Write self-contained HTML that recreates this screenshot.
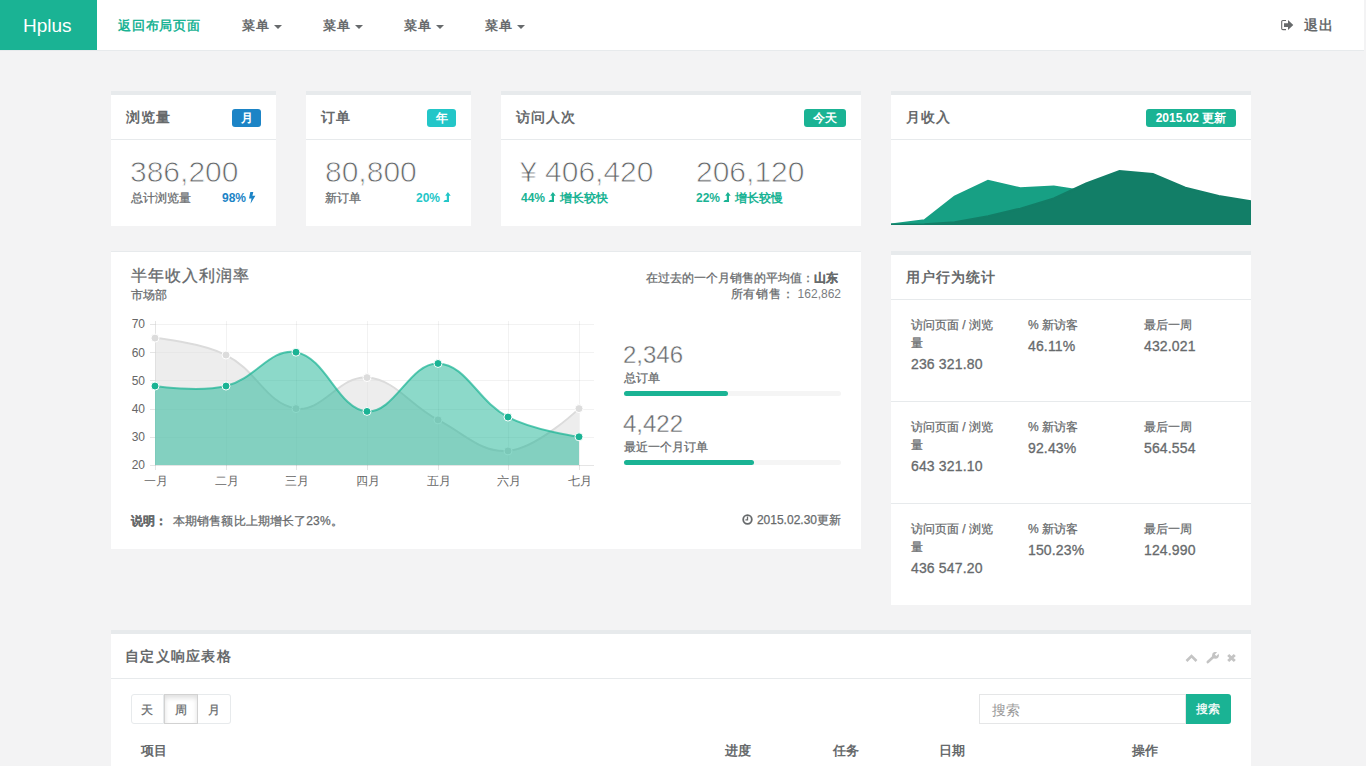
<!DOCTYPE html>
<html><head><meta charset="utf-8">
<style>
html,body{margin:0;padding:0}
body{width:1366px;height:766px;overflow:hidden;position:relative;background:#f3f3f4;font-family:"Liberation Sans",sans-serif;color:#676a6c;font-size:12px}
.a{position:absolute;white-space:nowrap}
.box{position:absolute;background:#fff}
.bt{border-top:4px solid #e7eaec}
.hl{position:absolute;left:0;right:0;height:1px;background:#e7eaec}
.c12{font-size:12px;line-height:20px;-webkit-text-stroke:.25px currentColor}
.ttl{font-size:14px;line-height:20px;font-weight:bold;color:#676a6c;letter-spacing:1px}
.lbl{position:absolute;height:18px;line-height:18px;border-radius:3px;color:#fff;font-weight:bold;font-size:12px;text-align:center}
.big{font-size:30px;line-height:34px;color:#676a6c;-webkit-text-stroke:.8px #fff}
.mid{font-size:24px;line-height:28px;color:#676a6c;-webkit-text-stroke:.4px #fff}
.nav{font-size:12.5px;line-height:20px;font-weight:bold;color:#676a6c;letter-spacing:.8px}
.caret{position:absolute;width:0;height:0;border-left:4px solid transparent;border-right:4px solid transparent;border-top:4px solid #676a6c}
.num{font-size:14px;line-height:20px;color:#676a6c;letter-spacing:.15px;-webkit-text-stroke:.3px #676a6c}
</style></head><body>

<!-- NAVBAR -->
<div class="box" style="left:0;top:0;width:1364px;height:50px;border-bottom:1px solid #e7eaec"></div>
<div class="box" style="left:0;top:0;width:97px;height:50px;background:#1ab394"></div>
<div class="a" style="left:23px;top:14px;font-size:19px;line-height:24px;color:#fff">Hplus</div>
<div class="a nav" style="left:118px;top:15.5px;color:#1ab394">返回布局页面</div>
<div class="a nav" style="left:242px;top:15.5px">菜单</div><div class="caret" style="left:274px;top:25px"></div>
<div class="a nav" style="left:323px;top:15.5px">菜单</div><div class="caret" style="left:355px;top:25px"></div>
<div class="a nav" style="left:404px;top:15.5px">菜单</div><div class="caret" style="left:436px;top:25px"></div>
<div class="a nav" style="left:485px;top:15.5px">菜单</div><div class="caret" style="left:517px;top:25px"></div>
<svg class="a" style="left:1280px;top:19px" width="15" height="13" viewBox="0 0 15 13"><path d="M6 1.5H2.9Q1.7 1.5 1.7 2.7V9.4Q1.7 10.6 2.9 10.6H6" fill="none" stroke="#676a6c" stroke-width="1.1"/><path d="M4 4.2H8V1L13.3 6.1L8 11.1V8H4Z" fill="#676a6c"/></svg>
<div class="a" style="left:1304px;top:15px;font-size:14px;line-height:20px;letter-spacing:1px;font-weight:bold;color:#676a6c">退出</div>

<!-- BOX 1 -->
<div class="box bt" style="left:111px;top:91px;width:165px;height:131px">
  <div class="hl" style="top:44px"></div>
</div>
<div class="a ttl" style="left:126px;top:107px">浏览量</div>
<div class="lbl" style="left:232px;top:109px;width:29px;background:#1c84c6">月</div>
<div class="a big" style="left:130px;top:155px">386,200</div>
<div class="a c12" style="left:131px;top:188px">总计浏览量</div>
<div class="a" style="left:222px;top:188px;font-size:12px;line-height:20px;font-weight:bold;color:#1c84c6">98% <svg width="7" height="12" viewBox="0 0 7 12" style="vertical-align:-2px"><path d="M1.3 0H4.3L3.4 3.8H6.4L1.5 11.8L2.5 6.4H0Z" fill="#1c84c6"/></svg></div>

<!-- BOX 2 -->
<div class="box bt" style="left:306px;top:91px;width:165px;height:131px">
  <div class="hl" style="top:44px"></div>
</div>
<div class="a ttl" style="left:321px;top:107px">订单</div>
<div class="lbl" style="left:427px;top:109px;width:29px;background:#23c6c8">年</div>
<div class="a big" style="left:325px;top:155px">80,800</div>
<div class="a c12" style="left:325px;top:188px">新订单</div>
<div class="a" style="left:416px;top:188px;font-size:12px;line-height:20px;font-weight:bold;color:#23c6c8">20% <svg width="8" height="10" viewBox="0 0 8 10" style="vertical-align:0px"><path d="M0.3 9.9L1.8 7.9H3.8V3.8H2.2L4.9 0L7.7 3.8H6V9.9Z" fill="#23c6c8"/></svg></div>

<!-- BOX 3 -->
<div class="box bt" style="left:501px;top:91px;width:360px;height:131px">
  <div class="hl" style="top:44px"></div>
</div>
<div class="a ttl" style="left:516px;top:107px">访问人次</div>
<div class="lbl" style="left:804px;top:109px;width:42px;background:#1ab394">今天</div>
<div class="a big" style="left:520px;top:155px">¥ 406,420</div>
<div class="a big" style="left:696px;top:155px">206,120</div>
<div class="a" style="left:521px;top:188px;font-size:12px;line-height:20px;font-weight:bold;color:#1ab394">44% <svg width="8" height="10" viewBox="0 0 8 10" style="vertical-align:0px"><path d="M0.3 9.9L1.8 7.9H3.8V3.8H2.2L4.9 0L7.7 3.8H6V9.9Z" fill="#1ab394"/></svg> 增长较快</div>
<div class="a" style="left:696px;top:188px;font-size:12px;line-height:20px;font-weight:bold;color:#1ab394">22% <svg width="8" height="10" viewBox="0 0 8 10" style="vertical-align:0px"><path d="M0.3 9.9L1.8 7.9H3.8V3.8H2.2L4.9 0L7.7 3.8H6V9.9Z" fill="#1ab394"/></svg> 增长较慢</div>

<!-- BOX 4 -->
<div class="box bt" style="left:891px;top:91px;width:360px;height:130px">
  <div class="hl" style="top:44px"></div>
</div>
<div class="a ttl" style="left:906px;top:107px">月收入</div>
<div class="lbl" style="left:1146px;top:109px;width:90px;background:#1ab394">2015.02 更新</div>
<svg class="a" style="left:0;top:0" width="1366" height="766"><defs><clipPath id="fc"><rect x="891" y="140" width="360" height="85"/></clipPath></defs><g clip-path="url(#fc)">
  <path d="M891.0 224.5 L924.4 220.3 L954.6 196.7 L988.0 180.9 L1020.3 188.3 L1053.8 186.6 L1086.1 191.4 L1119.5 191.5 L1152.9 195.9 L1185.3 208.0 L1218.7 210.1 L1251.0 210.5 L1251.0 224.5 Z" fill="#17a084" stroke="#17a084" stroke-width="2"/>
  <path d="M891.0 224.5 L924.4 224.2 L954.6 222.3 L988.0 216.2 L1020.3 208.6 L1053.8 198.5 L1086.1 183.5 L1119.5 171.1 L1152.9 174.1 L1185.3 187.7 L1218.7 195.9 L1251.0 201.3 L1251.0 224.5 Z" fill="#127e67" stroke="#127e67" stroke-width="2"/>
</g></svg>

<!-- BOX 5 -->
<div class="box" style="left:111px;top:251px;width:750px;height:298px;border-top:1px solid #e7eaec;box-sizing:border-box"></div>
<div class="a" style="left:131px;top:266px;font-size:16px;line-height:20px;letter-spacing:1px;-webkit-text-stroke:.3px #676a6c">半年收入利润率</div>
<div class="a c12" style="left:131px;top:285px">市场部</div>
<div class="a c12" style="right:528px;top:268px">在过去的一个月销售的平均值：<b>山东</b></div>
<div class="a c12" style="right:525px;top:284px"><span style="letter-spacing:.7px">所有销售：</span> <span style="-webkit-text-stroke:0;color:#7a7d7f">162,862</span></div>

<!--CHART--><svg class="a" style="left:0;top:0" width="1366" height="766">
<path d="M155 465.5H594" stroke="rgba(0,0,0,.1)" stroke-width="1"/>
<path d="M150 465.5H155" stroke="rgba(0,0,0,.1)" stroke-width="1"/>
<text x="145" y="469.3" text-anchor="end" font-size="12" fill="#666">20</text>
<path d="M155 437.5H594" stroke="rgba(0,0,0,.05)" stroke-width="1"/>
<path d="M150 437.5H155" stroke="rgba(0,0,0,.1)" stroke-width="1"/>
<text x="145" y="441.1" text-anchor="end" font-size="12" fill="#666">30</text>
<path d="M155 409.5H594" stroke="rgba(0,0,0,.05)" stroke-width="1"/>
<path d="M150 409.5H155" stroke="rgba(0,0,0,.1)" stroke-width="1"/>
<text x="145" y="412.9" text-anchor="end" font-size="12" fill="#666">40</text>
<path d="M155 380.5H594" stroke="rgba(0,0,0,.05)" stroke-width="1"/>
<path d="M150 380.5H155" stroke="rgba(0,0,0,.1)" stroke-width="1"/>
<text x="145" y="384.7" text-anchor="end" font-size="12" fill="#666">50</text>
<path d="M155 352.5H594" stroke="rgba(0,0,0,.05)" stroke-width="1"/>
<path d="M150 352.5H155" stroke="rgba(0,0,0,.1)" stroke-width="1"/>
<text x="145" y="356.5" text-anchor="end" font-size="12" fill="#666">60</text>
<path d="M155 324.5H594" stroke="rgba(0,0,0,.05)" stroke-width="1"/>
<path d="M150 324.5H155" stroke="rgba(0,0,0,.1)" stroke-width="1"/>
<text x="145" y="328.3" text-anchor="end" font-size="12" fill="#666">70</text>
<path d="M155.5 465.0V321.0" stroke="rgba(0,0,0,.1)" stroke-width="1"/>
<path d="M155.5 465.0V470.0" stroke="rgba(0,0,0,.1)" stroke-width="1"/>
<text x="155.5" y="484.5" text-anchor="middle" font-size="12" fill="#666">一月</text>
<path d="M226.5 465.0V321.0" stroke="rgba(0,0,0,.05)" stroke-width="1"/>
<path d="M226.5 465.0V470.0" stroke="rgba(0,0,0,.1)" stroke-width="1"/>
<text x="226.5" y="484.5" text-anchor="middle" font-size="12" fill="#666">二月</text>
<path d="M296.5 465.0V321.0" stroke="rgba(0,0,0,.05)" stroke-width="1"/>
<path d="M296.5 465.0V470.0" stroke="rgba(0,0,0,.1)" stroke-width="1"/>
<text x="296.5" y="484.5" text-anchor="middle" font-size="12" fill="#666">三月</text>
<path d="M367.5 465.0V321.0" stroke="rgba(0,0,0,.05)" stroke-width="1"/>
<path d="M367.5 465.0V470.0" stroke="rgba(0,0,0,.1)" stroke-width="1"/>
<text x="367.5" y="484.5" text-anchor="middle" font-size="12" fill="#666">四月</text>
<path d="M438.5 465.0V321.0" stroke="rgba(0,0,0,.05)" stroke-width="1"/>
<path d="M438.5 465.0V470.0" stroke="rgba(0,0,0,.1)" stroke-width="1"/>
<text x="438.5" y="484.5" text-anchor="middle" font-size="12" fill="#666">五月</text>
<path d="M508.5 465.0V321.0" stroke="rgba(0,0,0,.05)" stroke-width="1"/>
<path d="M508.5 465.0V470.0" stroke="rgba(0,0,0,.1)" stroke-width="1"/>
<text x="508.5" y="484.5" text-anchor="middle" font-size="12" fill="#666">六月</text>
<path d="M579.5 465.0V321.0" stroke="rgba(0,0,0,.05)" stroke-width="1"/>
<path d="M579.5 465.0V470.0" stroke="rgba(0,0,0,.1)" stroke-width="1"/>
<text x="579.5" y="484.5" text-anchor="middle" font-size="12" fill="#666">七月</text>
<path d="M155.00 338.10 C155.00 338.10 200.45 342.25 226.00 355.02 C256.85 370.45 265.98 403.80 296.00 408.60 C322.38 412.82 339.52 375.40 367.00 377.58 C396.32 379.91 408.72 404.66 438.00 419.88 C465.12 433.98 480.88 453.07 508.00 450.90 C537.28 448.56 579.00 408.60 579.00 408.60" fill="none" stroke="rgba(220,220,220,1)" stroke-width="2"/>
<path d="M155.00 338.10 C155.00 338.10 200.45 342.25 226.00 355.02 C256.85 370.45 265.98 403.80 296.00 408.60 C322.38 412.82 339.52 375.40 367.00 377.58 C396.32 379.91 408.72 404.66 438.00 419.88 C465.12 433.98 480.88 453.07 508.00 450.90 C537.28 448.56 579.00 408.60 579.00 408.60 L579 465.0 L155 465.0Z" fill="rgba(220,220,220,0.5)"/>
<circle cx="155" cy="338.10" r="4" fill="rgba(220,220,220,1)" stroke="#fff" stroke-width="1"/>
<circle cx="226" cy="355.02" r="4" fill="rgba(220,220,220,1)" stroke="#fff" stroke-width="1"/>
<circle cx="296" cy="408.60" r="4" fill="rgba(220,220,220,1)" stroke="#fff" stroke-width="1"/>
<circle cx="367" cy="377.58" r="4" fill="rgba(220,220,220,1)" stroke="#fff" stroke-width="1"/>
<circle cx="438" cy="419.88" r="4" fill="rgba(220,220,220,1)" stroke="#fff" stroke-width="1"/>
<circle cx="508" cy="450.90" r="4" fill="rgba(220,220,220,1)" stroke="#fff" stroke-width="1"/>
<circle cx="579" cy="408.60" r="4" fill="rgba(220,220,220,1)" stroke="#fff" stroke-width="1"/>
<path d="M155.00 386.04 C155.00 386.04 199.08 392.50 226.00 386.04 C255.48 378.96 270.24 347.56 296.00 352.20 C326.64 357.71 337.52 409.08 367.00 411.42 C394.32 413.59 410.20 362.37 438.00 363.48 C466.60 364.62 477.28 401.09 508.00 417.06 C533.68 430.41 579.00 436.80 579.00 436.80" fill="none" stroke="rgba(26,179,148,0.7)" stroke-width="2"/>
<path d="M155.00 386.04 C155.00 386.04 199.08 392.50 226.00 386.04 C255.48 378.96 270.24 347.56 296.00 352.20 C326.64 357.71 337.52 409.08 367.00 411.42 C394.32 413.59 410.20 362.37 438.00 363.48 C466.60 364.62 477.28 401.09 508.00 417.06 C533.68 430.41 579.00 436.80 579.00 436.80 L579 465.0 L155 465.0Z" fill="rgba(26,179,148,0.5)"/>
<circle cx="155" cy="386.04" r="4" fill="rgba(26,179,148,1)" stroke="#fff" stroke-width="1"/>
<circle cx="226" cy="386.04" r="4" fill="rgba(26,179,148,1)" stroke="#fff" stroke-width="1"/>
<circle cx="296" cy="352.20" r="4" fill="rgba(26,179,148,1)" stroke="#fff" stroke-width="1"/>
<circle cx="367" cy="411.42" r="4" fill="rgba(26,179,148,1)" stroke="#fff" stroke-width="1"/>
<circle cx="438" cy="363.48" r="4" fill="rgba(26,179,148,1)" stroke="#fff" stroke-width="1"/>
<circle cx="508" cy="417.06" r="4" fill="rgba(26,179,148,1)" stroke="#fff" stroke-width="1"/>
<circle cx="579" cy="436.80" r="4" fill="rgba(26,179,148,1)" stroke="#fff" stroke-width="1"/>
</svg><!--/CHART-->

<div class="a mid" style="left:623px;top:341px">2,346</div>
<div class="a c12" style="left:624px;top:368px">总订单</div>
<div class="box" style="left:624px;top:391px;width:217px;height:5px;background:#f5f5f5;border-radius:3px"><div style="width:104px;height:5px;background:#1ab394;border-radius:3px"></div></div>
<div class="a mid" style="left:623px;top:410px">4,422</div>
<div class="a c12" style="left:624px;top:437px">最近一个月订单</div>
<div class="box" style="left:624px;top:460px;width:217px;height:5px;background:#f5f5f5;border-radius:3px"><div style="width:130px;height:5px;background:#1ab394;border-radius:3px"></div></div>

<div class="a c12" style="left:131px;top:511px"><b>说明：</b></div><div class="a c12" style="left:173px;top:511px;letter-spacing:.12px">本期销售额比上期增长了23%。</div>
<div class="a c12" style="right:525px;top:510px"><svg style="margin-right:1px;vertical-align:-1px" width="11" height="11" viewBox="0 0 11 11" style="vertical-align:-1px"><circle cx="5.5" cy="5.5" r="4.3" fill="none" stroke="#676a6c" stroke-width="1.8"/><path d="M5.5 2.6V5.8H3.4" fill="none" stroke="#676a6c" stroke-width="1.3"/></svg> 2015.02.30更新</div>

<!-- BOX 6 -->
<div class="box bt" style="left:891px;top:251px;width:360px;height:350px">
  <div class="hl" style="top:44px"></div>
  <div class="hl" style="top:146px"></div>
  <div class="hl" style="top:248px"></div>
</div>
<div class="a ttl" style="left:906px;top:267px">用户行为统计</div>
<div class="a c12" style="left:911px;top:316px;line-height:18px">访问页面 / 浏览<br>量</div>
<div class="a num" style="left:911px;top:354px">236 321.80</div>
<div class="a c12" style="left:1028px;top:316px;line-height:18px">% 新访客</div>
<div class="a num" style="left:1028px;top:336px">46.11%</div>
<div class="a c12" style="left:1144px;top:316px;line-height:18px">最后一周</div>
<div class="a num" style="left:1144px;top:336px">432.021</div>
<div class="a c12" style="left:911px;top:418px;line-height:18px">访问页面 / 浏览<br>量</div>
<div class="a num" style="left:911px;top:456px">643 321.10</div>
<div class="a c12" style="left:1028px;top:418px;line-height:18px">% 新访客</div>
<div class="a num" style="left:1028px;top:438px">92.43%</div>
<div class="a c12" style="left:1144px;top:418px;line-height:18px">最后一周</div>
<div class="a num" style="left:1144px;top:438px">564.554</div>
<div class="a c12" style="left:911px;top:520px;line-height:18px">访问页面 / 浏览<br>量</div>
<div class="a num" style="left:911px;top:558px">436 547.20</div>
<div class="a c12" style="left:1028px;top:520px;line-height:18px">% 新访客</div>
<div class="a num" style="left:1028px;top:540px">150.23%</div>
<div class="a c12" style="left:1144px;top:520px;line-height:18px">最后一周</div>
<div class="a num" style="left:1144px;top:540px">124.990</div>

<!-- BOX 7 -->
<div class="box bt" style="left:111px;top:630px;width:1140px;height:140px">
  <div class="hl" style="top:44px"></div>
</div>
<div class="a ttl" style="left:125px;top:646px;letter-spacing:1.3px">自定义响应表格</div>

<div class="box" style="left:131px;top:694px;width:33px;height:30px;border:1px solid #e7eaec;box-sizing:border-box;border-radius:3px 0 0 3px"></div>
<div class="box" style="left:164px;top:694px;width:34px;height:30px;border:1px solid #d2d2d2;box-sizing:border-box;box-shadow:inset 0 3px 5px rgba(0,0,0,.125)"></div>
<div class="box" style="left:198px;top:694px;width:33px;height:30px;border:1px solid #e7eaec;border-left:0;box-sizing:border-box;border-radius:0 3px 3px 0"></div>
<div class="a c12" style="left:141px;top:700px">天</div>
<div class="a c12" style="left:175px;top:700px">周</div>
<div class="a c12" style="left:208px;top:700px">月</div>
<div class="box" style="left:979px;top:694px;width:207px;height:30px;border:1px solid #e5e6e7;box-sizing:border-box"></div>
<div class="a" style="left:992px;top:700px;font-size:14px;line-height:20px;color:#999">搜索</div>
<div class="box" style="left:1186px;top:694px;width:45px;height:30px;background:#1ab394;border-radius:0 3px 3px 0"></div>
<div class="a c12" style="left:1196px;top:699px;color:#fff">搜索</div>
<div class="a" style="left:141px;top:741px;font-size:13px;line-height:20px;font-weight:bold">项目</div>
<div class="a" style="left:725px;top:741px;font-size:13px;line-height:20px;font-weight:bold">进度</div>
<div class="a" style="left:833px;top:741px;font-size:13px;line-height:20px;font-weight:bold">任务</div>
<div class="a" style="left:939px;top:741px;font-size:13px;line-height:20px;font-weight:bold">日期</div>
<div class="a" style="left:1132px;top:741px;font-size:13px;line-height:20px;font-weight:bold">操作</div>
<svg class="a" style="left:1185px;top:652px" width="55" height="12" viewBox="0 0 55 12">
<path d="M1.5 9L6.5 4L11.5 9" fill="none" stroke="#c4c4c4" stroke-width="2.6"/>
<path d="M22.8 10L28.8 4.5" stroke="#c4c4c4" stroke-width="2.6" stroke-linecap="round"/><circle cx="30.5" cy="3.3" r="3.4" fill="#c4c4c4"/><path d="M30.6 3.2L34 -0.2" stroke="#fff" stroke-width="2.2"/>
<path d="M43.2 3.0L49.8 9.0M49.8 3.0L43.2 9.0" stroke="#c4c4c4" stroke-width="3"/>
</svg>


</body></html>
